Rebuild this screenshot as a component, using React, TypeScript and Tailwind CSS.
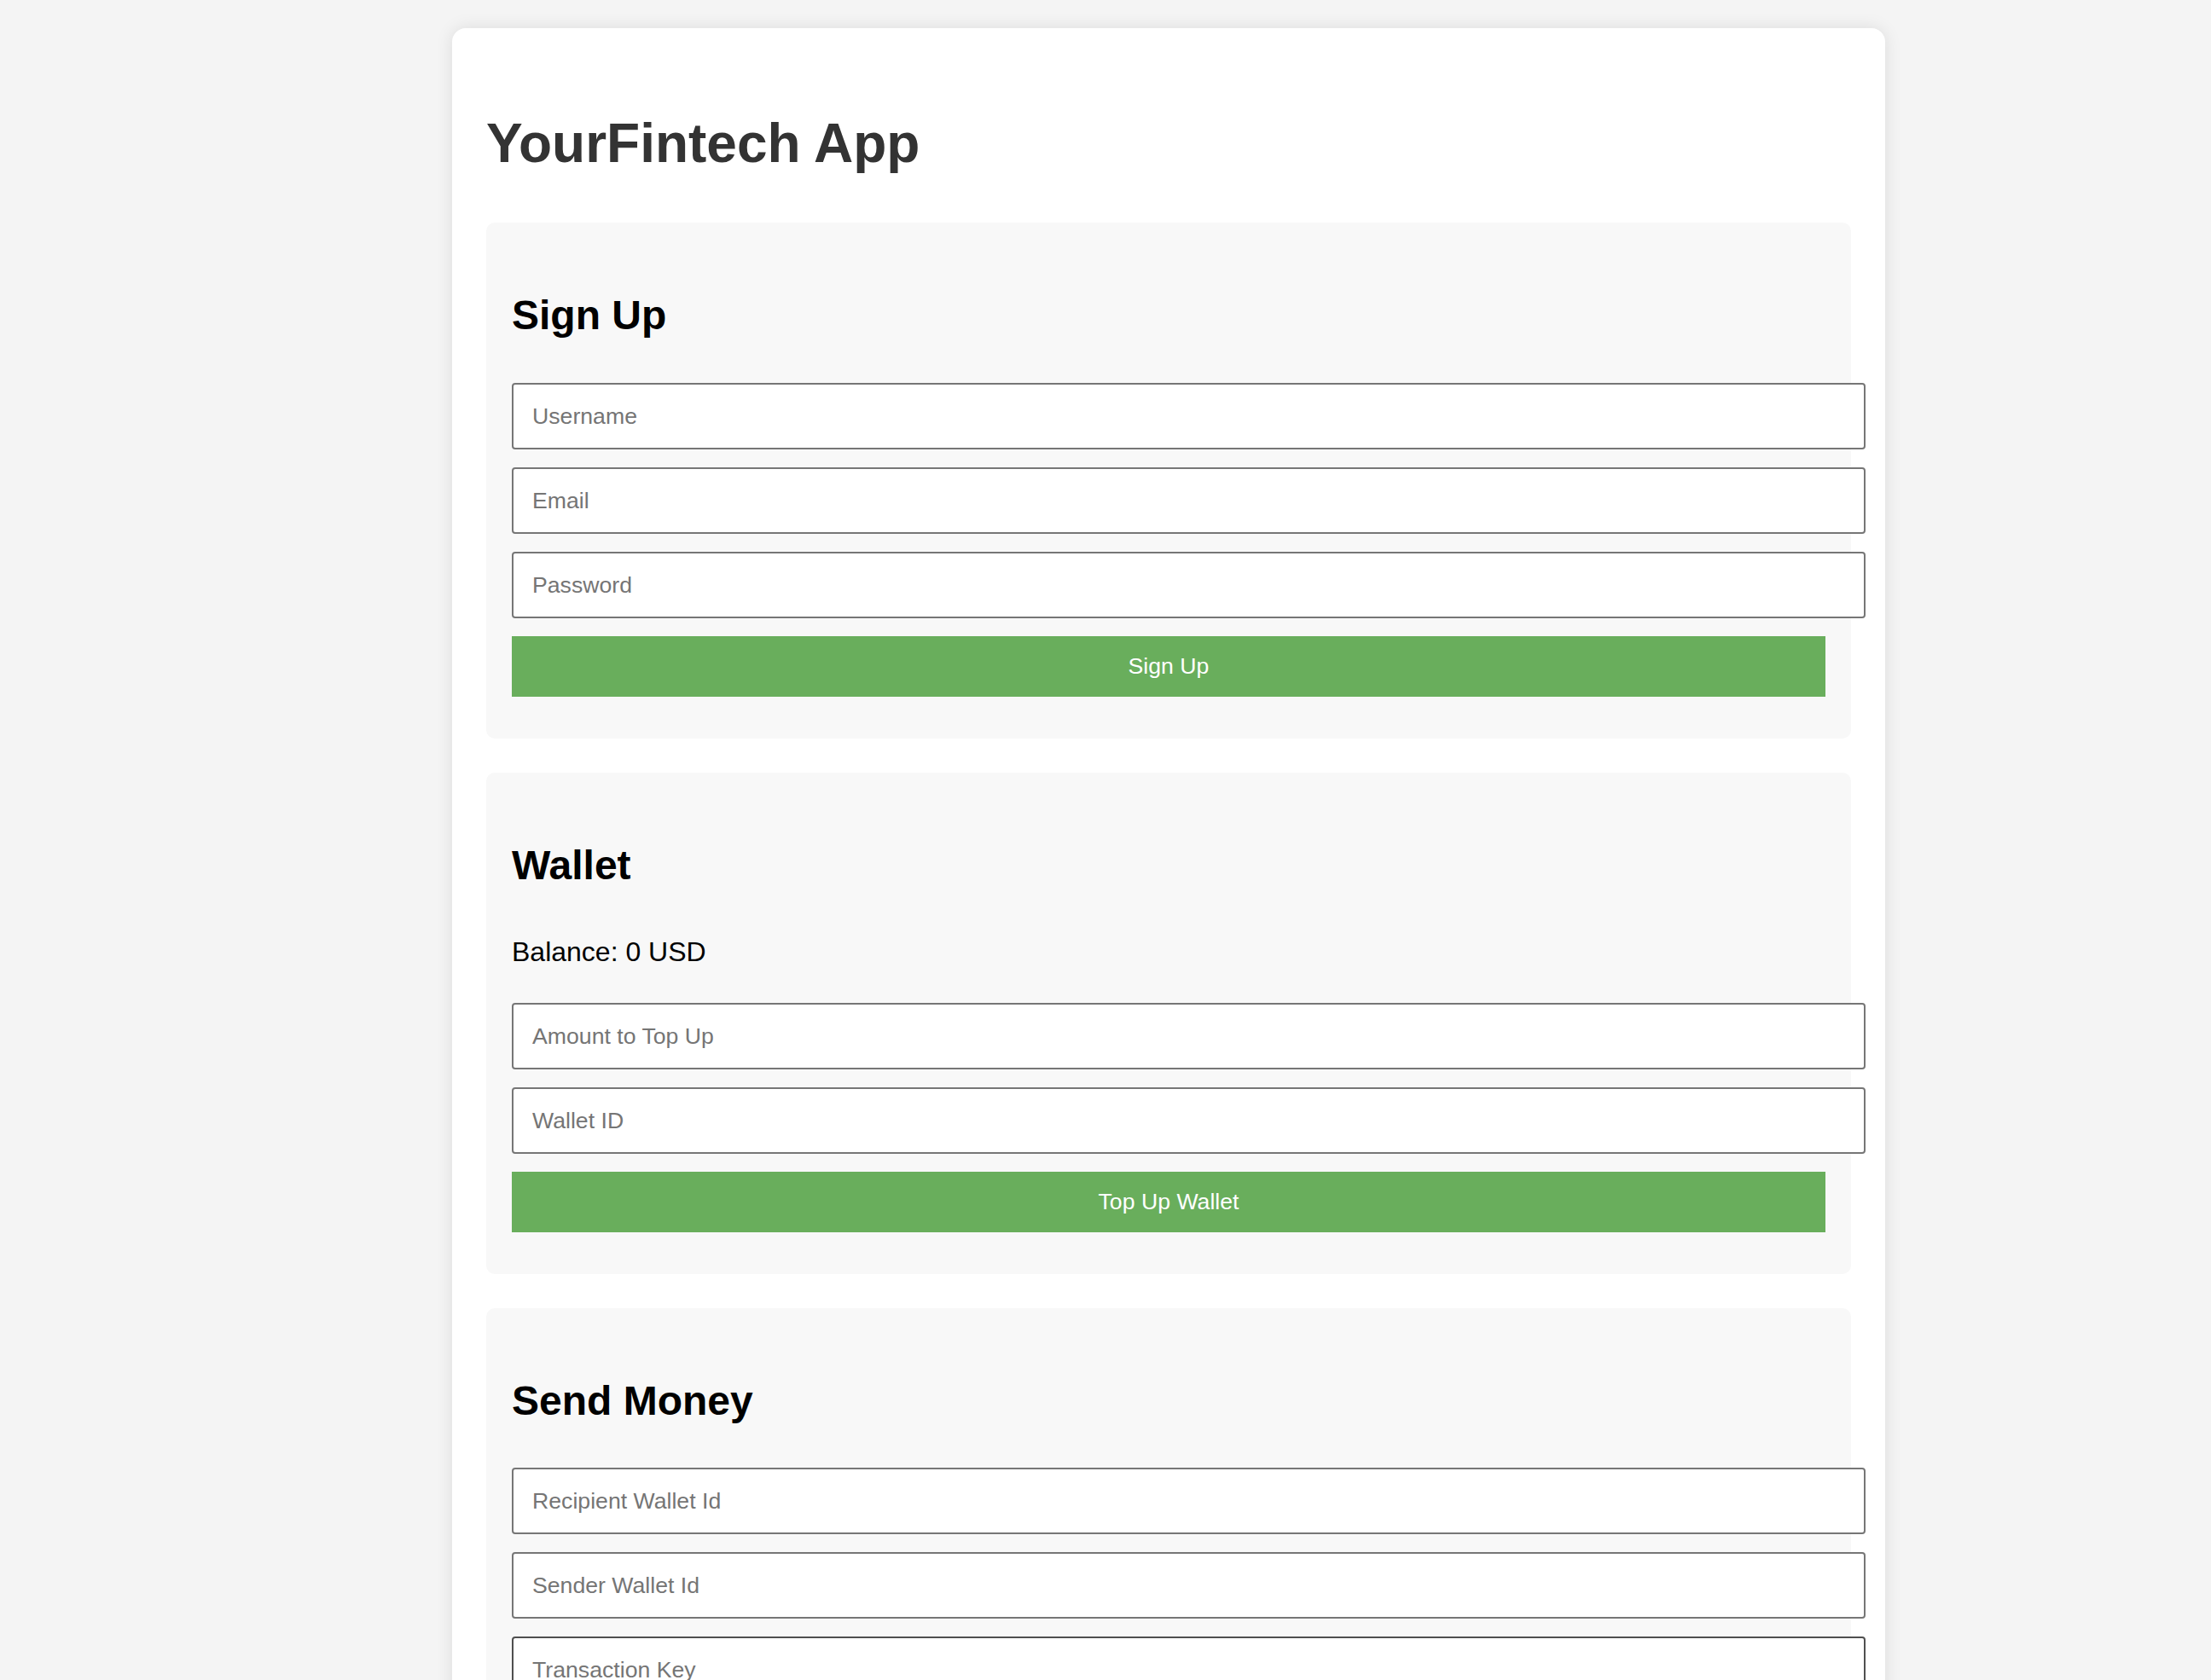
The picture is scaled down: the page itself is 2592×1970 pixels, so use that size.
import React from 'react';

const inputCls =
  'block w-[1587px] h-[78px] mb-[21px] pl-[22px] pr-[20px] bg-white border-2 border-[#767676] rounded-[4px] text-[26.67px] text-black placeholder:text-[#757575] outline-none';

const buttonCls =
  'block w-full h-[71px] bg-[#69ae5c] text-white text-[26.67px] leading-[31px] cursor-pointer';

function Section({ title, children }: { title: string; children: React.ReactNode }) {
  return (
    <section className="w-full bg-[#f8f8f8] rounded-[10px] px-[30px] pt-[81px] pb-[49px] mb-[40px]">
      <h2 className="text-[48px] leading-[55px] font-bold text-black">{title}</h2>
      {children}
    </section>
  );
}

export default function App() {
  return (
    <div className="h-[1970px] overflow-hidden bg-[#f4f4f4] font-['Liberation_Sans',Arial,sans-serif]">
      <div className="ml-[530px] mt-[33px] w-[1680px] bg-white rounded-[16px] shadow-[0_0_20px_rgba(0,0,0,0.1)] px-[40px] pt-[98px] pb-[40px]">
        <h1 className="text-[64px] leading-[74px] font-bold text-[#333333] mb-[56px]">YourFintech App</h1>

        <Section title="Sign Up">
          <div className="mt-[52px]">
            <input className={inputCls} placeholder="Username" />
            <input className={inputCls} placeholder="Email" />
            <input className={inputCls} type="password" placeholder="Password" />
            <button className={buttonCls}>Sign Up</button>
          </div>
        </Section>

        <Section title="Wallet">
          <p className="mt-[56px] mb-[41px] text-[32px] leading-[37px] text-black">Balance: 0 USD</p>
          <input className={inputCls} placeholder="Amount to Top Up" />
          <input className={inputCls} placeholder="Wallet ID" />
          <button className={buttonCls}>Top Up Wallet</button>
        </Section>

        <Section title="Send Money">
          <div className="mt-[51px]">
            <input className={inputCls} placeholder="Recipient Wallet Id" />
            <input className={inputCls} placeholder="Sender Wallet Id" />
            <input
              className="block w-[1587px] h-[78px] mb-[21px] pl-[22px] pr-[20px] bg-white border-2 border-[#4f4f4f] rounded-[4px] text-[26.67px] text-black placeholder:text-[#757575] outline-none"
              placeholder="Transaction Key"
            />
            <input className={inputCls} placeholder="Amount" />
            <button className={buttonCls}>Send Money</button>
          </div>
        </Section>
      </div>
    </div>
  );
}
